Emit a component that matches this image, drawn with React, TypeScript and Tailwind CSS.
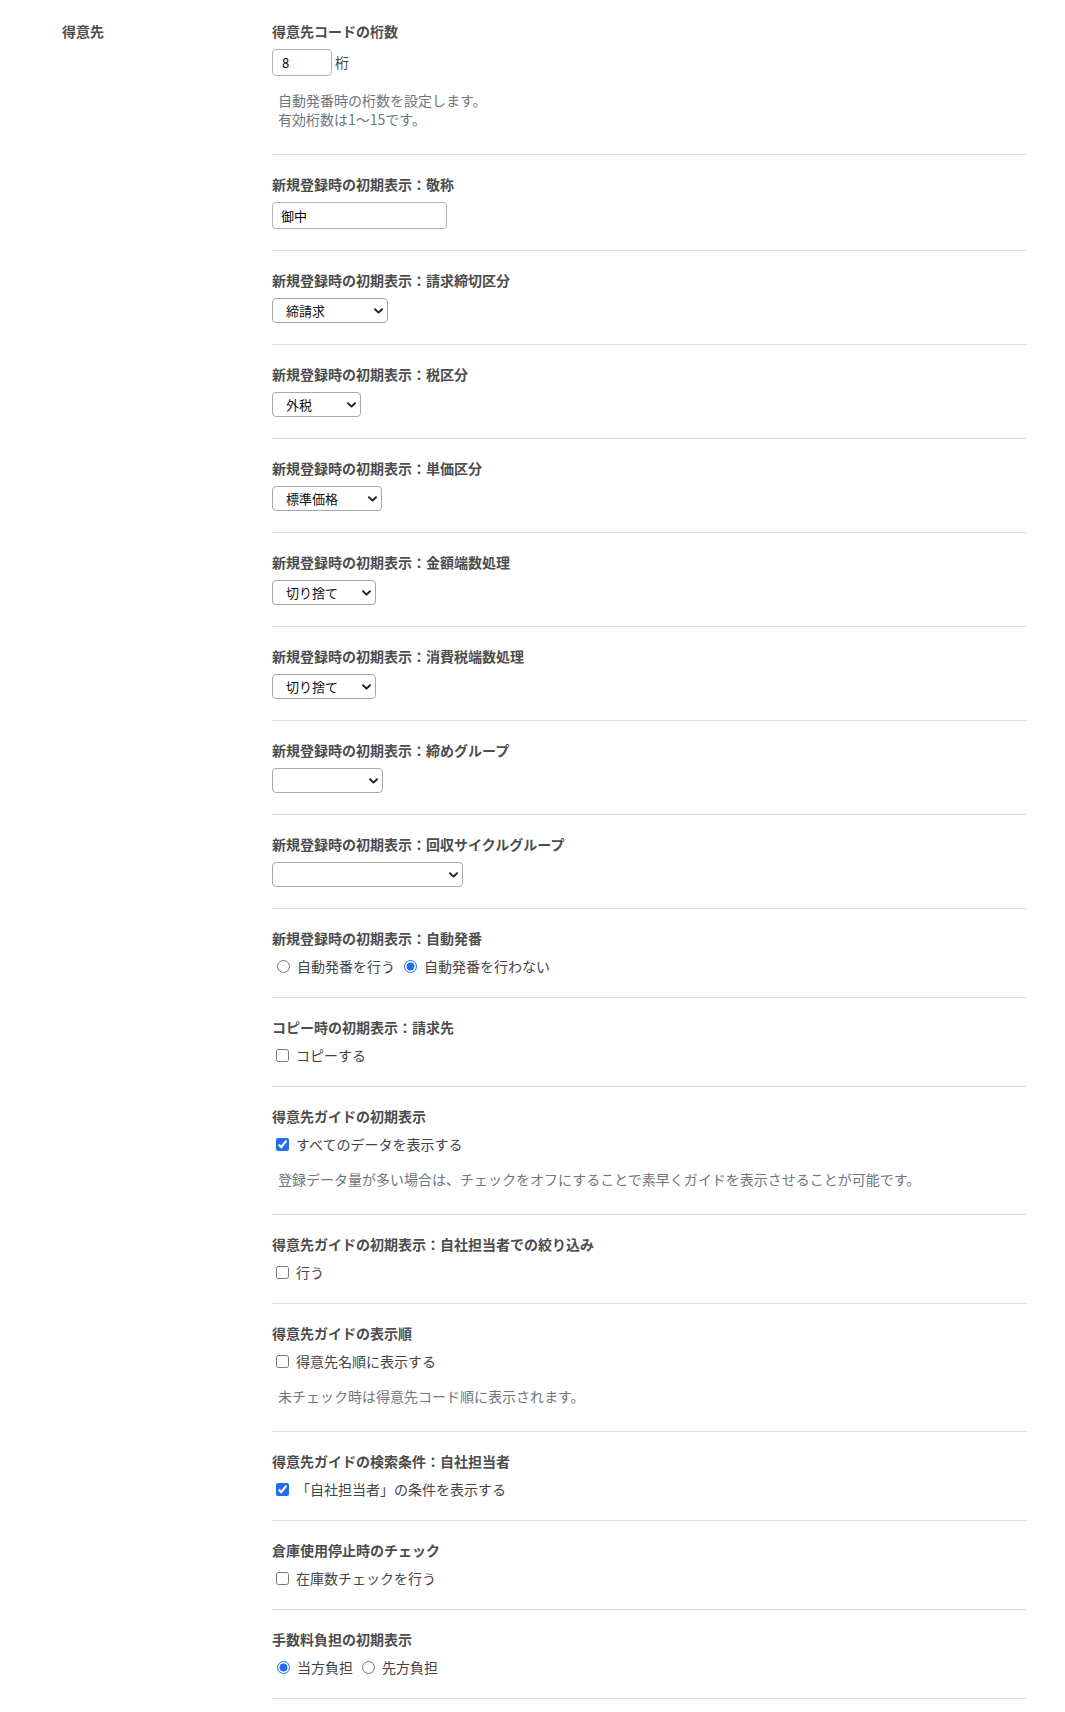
import { useState } from "react";

type Section =
  | { kind: "digits"; title: string }
  | { kind: "text"; title: string; value: string }
  | { kind: "select"; title: string; value: string; width: string }
  | { kind: "radio"; title: string; options: string[]; checked: number }
  | { kind: "checkbox"; title: string; label: string; checked: boolean; help?: string };

const sections: Section[] = [
  { kind: "digits", title: "得意先コードの桁数" },
  { kind: "text", title: "新規登録時の初期表示：敬称", value: "御中" },
  { kind: "select", title: "新規登録時の初期表示：請求締切区分", value: "締請求", width: "w-[116px]" },
  { kind: "select", title: "新規登録時の初期表示：税区分", value: "外税", width: "w-[89px]" },
  { kind: "select", title: "新規登録時の初期表示：単価区分", value: "標準価格", width: "w-[110px]" },
  { kind: "select", title: "新規登録時の初期表示：金額端数処理", value: "切り捨て", width: "w-[104px]" },
  { kind: "select", title: "新規登録時の初期表示：消費税端数処理", value: "切り捨て", width: "w-[104px]" },
  { kind: "select", title: "新規登録時の初期表示：締めグループ", value: "", width: "w-[111px]" },
  { kind: "select", title: "新規登録時の初期表示：回収サイクルグループ", value: "", width: "w-[191px]" },
  {
    kind: "radio",
    title: "新規登録時の初期表示：自動発番",
    options: ["自動発番を行う", "自動発番を行わない"],
    checked: 1,
  },
  { kind: "checkbox", title: "コピー時の初期表示：請求先", label: "コピーする", checked: false },
  {
    kind: "checkbox",
    title: "得意先ガイドの初期表示",
    label: "すべてのデータを表示する",
    checked: true,
    help: "登録データ量が多い場合は、チェックをオフにすることで素早くガイドを表示させることが可能です。",
  },
  { kind: "checkbox", title: "得意先ガイドの初期表示：自社担当者での絞り込み", label: "行う", checked: false },
  {
    kind: "checkbox",
    title: "得意先ガイドの表示順",
    label: "得意先名順に表示する",
    checked: false,
    help: "未チェック時は得意先コード順に表示されます。",
  },
  {
    kind: "checkbox",
    title: "得意先ガイドの検索条件：自社担当者",
    label: "「自社担当者」の条件を表示する",
    checked: true,
  },
  { kind: "checkbox", title: "倉庫使用停止時のチェック", label: "在庫数チェックを行う", checked: false },
  {
    kind: "radio",
    title: "手数料負担の初期表示",
    options: ["当方負担", "先方負担"],
    checked: 0,
  },
];

function Chevron() {
  return (
    <svg
      className="pointer-events-none absolute right-[5px] top-1/2 -translate-y-1/2"
      width="9"
      height="6"
      viewBox="0 0 9 6"
      fill="none"
    >
      <path d="M1 1.2 4.5 4.6 8 1.2" stroke="#222" strokeWidth="1.9" strokeLinecap="round" strokeLinejoin="round" />
    </svg>
  );
}

function SelectBox({ value, width }: { value: string; width: string }) {
  return (
    <div className={`relative ${width}`}>
      <select
        defaultValue={value}
        className="block h-[25px] w-full appearance-none rounded-[4px] border border-[#a8a8a8] bg-white pl-[13px] pr-5 text-[13px] text-[#111] outline-none"
      >
        <option value={value}>{value}</option>
      </select>
      <Chevron />
    </div>
  );
}

function Help({ children }: { children: React.ReactNode }) {
  return (
    <p className="mt-[16px] mb-[4px] pl-[6px] text-[14px] leading-[19px] text-[#6e7680]">{children}</p>
  );
}

function Body({ s }: { s: Section }) {
  const [digits, setDigits] = useState("8");

  switch (s.kind) {
    case "digits":
      return (
        <>
          <div className="flex items-center">
            <input
              value={digits}
              onChange={(e) => setDigits(e.target.value)}
              className="h-[27px] w-[60px] rounded-[4px] border border-[#b4b4b4] bg-white pl-[9px] text-[13px] text-black outline-none"
            />
            <span className="ml-[3px] text-[14px] text-[#444]">桁</span>
          </div>
          <p className="mt-[15px] mb-[4px] pl-[6px] text-[14px] leading-[19px] text-[#6e7680]">
            自動発番時の桁数を設定します。
            <br />
            有効桁数は1〜15です。
          </p>
        </>
      );
    case "text":
      return (
        <input
          defaultValue={s.value}
          className="block h-[27px] w-[175px] rounded-[4px] border border-[#b4b4b4] bg-white pl-[8px] text-[13px] text-black outline-none"
        />
      );
    case "select":
      return <SelectBox value={s.value} width={s.width} />;
    case "radio":
      return (
        <div className="flex h-5 items-center text-[14px] text-[#444]">
          {s.options.map((o, i) => (
            <label key={o} className="mr-[4px] flex items-center">
              <input
                type="radio"
                name={s.title}
                defaultChecked={i === s.checked}
                className="ml-[5px] mr-[3px] h-[13px] w-[13px] accent-[#1f6ff0]"
              />
              <span className="ml-[4px]">{o}</span>
            </label>
          ))}
        </div>
      );
    case "checkbox":
      return (
        <>
          <label className="flex h-5 items-center text-[14px] text-[#444]">
            <input
              type="checkbox"
              defaultChecked={s.checked}
              className="ml-[4px] mr-[3px] h-[13px] w-[13px] accent-[#1f6ff0]"
            />
            <span className="ml-[4px]">{s.label}</span>
          </label>
          {s.help && <Help>{s.help}</Help>}
        </>
      );
  }
}

export default function App() {
  return (
    <div className="min-h-screen bg-white font-['Noto_Sans_CJK_JP','Noto_Sans',sans-serif]">
      <div className="flex pl-[62px]">
        <div className="w-[210px] shrink-0 pt-[21px] text-[14px] font-bold leading-5 text-[#4d4d4d]">得意先</div>
        <div className="w-[755px]">
          {sections.map((s, i) => (
            <div
              key={s.title}
              className={`border-b border-[#dddddd] pb-[21px] ${i === 0 ? "pt-[21px]" : "pt-[19px]"}`}
            >
              <div className="mb-2 text-[14px] font-bold leading-5 text-[#4d4d4d]">{s.title}</div>
              <Body s={s} />
            </div>
          ))}
        </div>
      </div>
    </div>
  );
}
